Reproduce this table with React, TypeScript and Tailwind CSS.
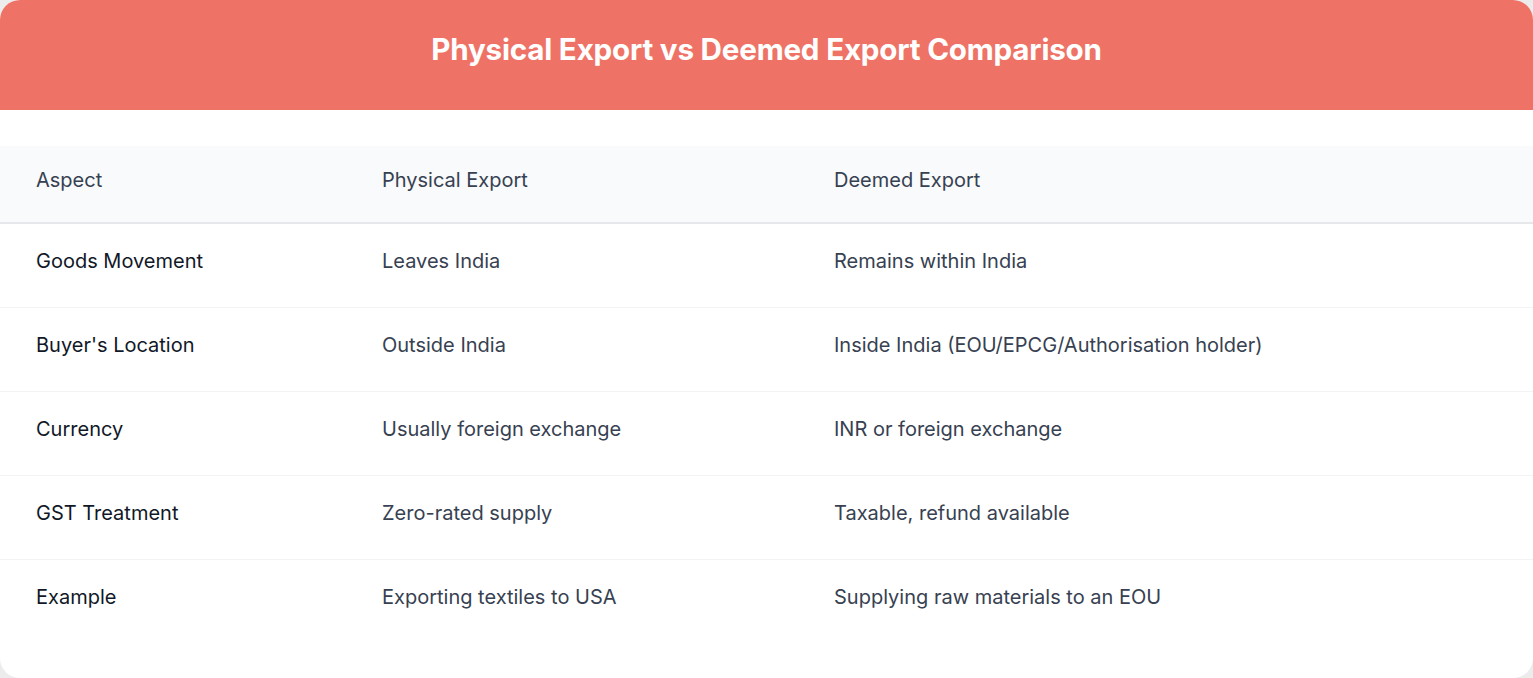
import React from "react";

const rows = [
  { aspect: "Goods Movement", physical: "Leaves India", deemed: "Remains within India" },
  { aspect: "Buyer's Location", physical: "Outside India", deemed: "Inside India (EOU/EPCG/Authorisation holder)" },
  { aspect: "Currency", physical: "Usually foreign exchange", deemed: "INR or foreign exchange" },
  { aspect: "GST Treatment", physical: "Zero-rated supply", deemed: "Taxable, refund available" },
  { aspect: "Example", physical: "Exporting textiles to USA", deemed: "Supplying raw materials to an EOU" },
];

const App: React.FC = () => {
  return (
    <div className="w-[1533px] h-[678px] bg-[#ececec] font-['Inter',sans-serif]">
      <div className="h-full rounded-[20px] bg-white overflow-hidden flex flex-col">
        <div className="h-[110px] bg-[#ee7366] flex items-center justify-center pb-[12px]">
          <h1 className="text-white text-[29.6px] font-bold tracking-[-0.2px]">
            Physical Export vs Deemed Export Comparison
          </h1>
        </div>

        <div className="mt-[36px] text-[20px]">
          <div className="grid grid-cols-[346px_452px_1fr] h-[78px] items-center bg-[#f8fafc] border-b-2 border-[#e5e7eb] text-[#374151] pl-[36px] pb-[8px]">
            <div>Aspect</div>
            <div>Physical Export</div>
            <div>Deemed Export</div>
          </div>
          {rows.map((r, i) => (
            <div
              key={r.aspect}
              className={
                "grid grid-cols-[346px_452px_1fr] h-[84px] items-center pl-[36px] pb-[10px] " +
                (i < rows.length - 1 ? "border-b border-[#f1f3f5]" : "")
              }
            >
              <div className="text-[#111827]">{r.aspect}</div>
              <div className="text-[#374151]">{r.physical}</div>
              <div className="text-[#374151]">{r.deemed}</div>
            </div>
          ))}
        </div>
      </div>
    </div>
  );
};

export default App;
